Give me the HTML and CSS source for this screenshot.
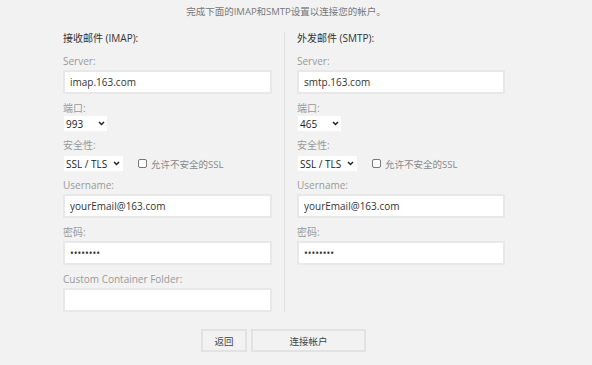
FILE: index.html
```html
<!DOCTYPE html>
<html lang="zh-CN">
<head>
    <meta charset="UTF-8">
    <meta name="viewport" content="width=device-width, initial-scale=1.0">
    <title>连接帐户</title>
    <link rel="stylesheet" href="styles.css">
</head>
<body>
    <div class="account-setup">
        <p class="intro">完成下面的IMAP和SMTP设置以连接您的帐户。</p>

        <form class="columns">
            <div class="col">
                <h3>接收邮件 (IMAP):</h3>

                <div class="field">
                    <label for="imap-server">Server:</label>
                    <input type="text" class="text-input" id="imap-server" value="imap.163.com">
                </div>

                <div class="field">
                    <label for="imap-port">端口:</label>
                    <div class="select select-port">
                        <select id="imap-port">
                            <option>993</option>
                            <option>143</option>
                        </select>
                        <svg width="7" height="5" viewBox="0 0 7 5"><path d="M1 1l2.5 2.5L6 1" fill="none" stroke="#222" stroke-width="1.5"/></svg>
                    </div>
                </div>

                <div class="field">
                    <label for="imap-security">安全性:</label>
                    <div class="security-row">
                        <div class="select select-security">
                            <select id="imap-security">
                                <option>SSL / TLS</option>
                                <option>STARTTLS</option>
                            </select>
                            <svg width="7" height="5" viewBox="0 0 7 5"><path d="M1 1l2.5 2.5L6 1" fill="none" stroke="#222" stroke-width="1.5"/></svg>
                        </div>
                        <label class="check"><input type="checkbox"> 允许不安全的SSL</label>
                    </div>
                </div>

                <div class="field">
                    <label for="imap-username">Username:</label>
                    <input type="text" class="text-input" id="imap-username" value="yourEmail@163.com">
                </div>

                <div class="field">
                    <label for="imap-password">密码:</label>
                    <input type="password" class="text-input" id="imap-password" value="12345678">
                </div>

                <div class="field">
                    <label for="imap-folder">Custom Container Folder:</label>
                    <input type="text" class="text-input" id="imap-folder">
                </div>
            </div>

            <div class="col col-right">
                <h3>外发邮件 (SMTP):</h3>

                <div class="field">
                    <label for="smtp-server">Server:</label>
                    <input type="text" class="text-input" id="smtp-server" value="smtp.163.com">
                </div>

                <div class="field">
                    <label for="smtp-port">端口:</label>
                    <div class="select select-port">
                        <select id="smtp-port">
                            <option>465</option>
                            <option>587</option>
                        </select>
                        <svg width="7" height="5" viewBox="0 0 7 5"><path d="M1 1l2.5 2.5L6 1" fill="none" stroke="#222" stroke-width="1.5"/></svg>
                    </div>
                </div>

                <div class="field">
                    <label for="smtp-security">安全性:</label>
                    <div class="security-row">
                        <div class="select select-security">
                            <select id="smtp-security">
                                <option>SSL / TLS</option>
                                <option>STARTTLS</option>
                            </select>
                            <svg width="7" height="5" viewBox="0 0 7 5"><path d="M1 1l2.5 2.5L6 1" fill="none" stroke="#222" stroke-width="1.5"/></svg>
                        </div>
                        <label class="check"><input type="checkbox"> 允许不安全的SSL</label>
                    </div>
                </div>

                <div class="field">
                    <label for="smtp-username">Username:</label>
                    <input type="text" class="text-input" id="smtp-username" value="yourEmail@163.com">
                </div>

                <div class="field">
                    <label for="smtp-password">密码:</label>
                    <input type="password" class="text-input" id="smtp-password" value="12345678">
                </div>
            </div>
        </form>

        <div class="actions">
            <button type="button" class="button button-back">返回</button>
            <button type="button" class="button button-connect">连接帐户</button>
        </div>
    </div>
</body>
</html>
```

FILE: styles.css
```css
body {
    font-family: 'Open Sans', 'Noto Sans CJK SC', sans-serif;
    font-size: 9.5px;
    color: #333;
    margin: 0;
    padding: 0;
    background-color: #f2f2f2;
}
.account-setup {
    width: 446px;
    margin-left: 63px;
}
.intro {
    margin: 0;
    padding-top: 4px;
    line-height: 16px;
    text-align: center;
    color: #777;
}
.columns {
    display: grid;
    grid-template-columns: 209px 1fr;
    column-gap: 12px;
    margin-top: 10px;
    padding-bottom: 4px;
}
.col-right {
    border-left: 1px solid #e0e0e0;
    padding-left: 12px;
    padding-right: 4px;
    margin-top: 2px;
}
.col-right h3 {
    margin-top: -2px;
}
h3 {
    margin: 0 0 7px;
    font-size: 10px;
    font-weight: normal;
    line-height: 16px;
    color: #333;
}
.field + .field {
    margin-top: 6px;
}
.field > label {
    display: block;
    line-height: 16px;
    font-size: 10px;
    color: #999;
}
.text-input {
    display: block;
    box-sizing: border-box;
    width: 100%;
    height: 24px;
    margin-top: 1px;
    padding: 0 5px;
    border: 2px solid #e8e8e8;
    background-color: white;
    font-family: inherit;
    font-size: 10px;
    color: #333;
    outline: none;
}
.select {
    display: inline-flex;
    align-items: center;
    height: 15px;
    margin-left: 1px;
    background-color: white;
}
.select select {
    flex: 1;
    appearance: none;
    border: none;
    background: transparent;
    padding: 0 0 0 2px;
    height: 100%;
    font-family: inherit;
    font-size: 10px;
    color: #222;
    outline: none;
}
.select svg {
    margin-right: 2px;
}
.select-port {
    width: 43px;
}
.select-security {
    width: 59px;
}
.select-security svg {
    margin-right: 3px;
}
.security-row {
    display: flex;
    align-items: center;
    margin-top: 3px;
}
.check {
    display: flex;
    align-items: center;
    gap: 4px;
    margin-left: 15px;
    color: #888;
}
.check input {
    appearance: none;
    width: 9px;
    height: 9px;
    margin: 0;
    border: 1px solid #777;
    border-radius: 2px;
    background-color: white;
}
.actions {
    display: flex;
    gap: 4px;
    margin-top: 13px;
    padding-left: 138px;
}
.button {
    box-sizing: border-box;
    height: 23px;
    border: 2px solid #e2e2e2;
    background-color: #f2f2f2;
    font-family: inherit;
    font-size: 9.5px;
    color: #444;
    cursor: pointer;
}
.button-back {
    width: 46px;
}
.button-connect {
    width: 115px;
}
```
